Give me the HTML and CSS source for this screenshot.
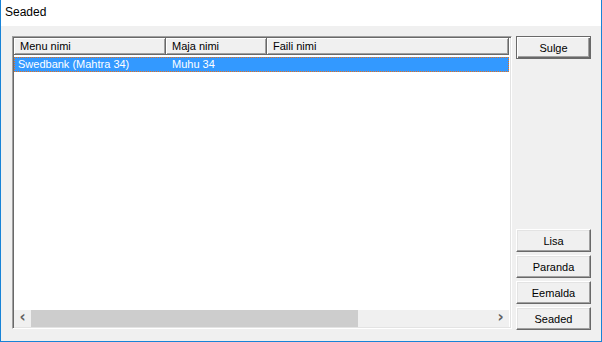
FILE: index.html
```html
<!DOCTYPE html>
<html lang="et">
<head>
    <meta charset="UTF-8">
    <title>Seaded</title>
    <link rel="stylesheet" href="styles.css">
</head>
<body>
    <div class="window">
        <div class="titlebar">Seaded</div>
        <div class="client">
            <div class="listview">
                <div class="header">
                    <div class="col col-menu">Menu nimi</div>
                    <div class="col col-maja">Maja nimi</div>
                    <div class="col col-faili">Faili nimi</div>
                </div>
                <div class="rows">
                    <div class="row selected">
                        <span class="cell col-menu">Swedbank (Mahtra 34)</span>
                        <span class="cell col-maja">Muhu 34</span>
                        <span class="cell col-faili"></span>
                    </div>
                </div>
                <div class="hscroll">
                    <div class="arrow">&#8249;</div>
                    <div class="track">
                        <div class="thumb"></div>
                    </div>
                    <div class="arrow">&#8250;</div>
                </div>
            </div>
            <div class="buttons">
                <button class="btn default">Sulge</button>
                <div class="spacer"></div>
                <button class="btn">Lisa</button>
                <button class="btn">Paranda</button>
                <button class="btn">Eemalda</button>
                <button class="btn">Seaded</button>
            </div>
        </div>
    </div>
</body>
</html>
```

FILE: styles.css
```css
body {
    margin: 0;
    padding: 0;
    font-family: "Liberation Sans", Arial, sans-serif;
    font-size: 11px;
    color: #000;
    background: #fff;
}
.window {
    width: 602px;
    height: 342px;
    box-sizing: border-box;
    border: 1px solid #1883d7;
    border-top: none;
    display: flex;
    flex-direction: column;
}
.titlebar {
    height: 26px;
    background: #fff;
    font-size: 12px;
    padding: 5px 0 0 4px;
    box-sizing: border-box;
}
.client {
    flex: 1;
    background: #f0f0f0;
    display: flex;
    padding: 10px 0 0 11px;
    gap: 4px;
}
.listview {
    width: 500px;
    height: 293px;
    box-sizing: border-box;
    border-top: 1px solid #a0a0a0;
    border-left: 1px solid #a0a0a0;
    border-right: 1px solid #fff;
    border-bottom: 1px solid #fff;
    box-shadow: inset 1px 1px 0 #696969, inset -1px -1px 0 #e3e3e3;
    padding: 1px 2px 1px 1px;
    background: #fff;
    display: flex;
    flex-direction: column;
}
.header {
    display: flex;
    height: 17px;
    background: #f0f0f0;
}
.header .col {
    box-sizing: border-box;
    height: 17px;
    padding: 2px 0 0 6px;
    border-right: 1px solid #696969;
    border-bottom: 1px solid #696969;
    box-shadow: inset 1px 1px 0 #fff, inset -1px -1px 0 #a0a0a0;
}
.col-menu {
    width: 152px;
}
.col-maja {
    width: 101px;
}
.col-faili {
    flex: 1;
}
.rows {
    flex: 1;
    padding-top: 2px;
}
.row {
    display: flex;
    height: 15px;
    line-height: 13px;
    box-sizing: border-box;
}
.row.selected {
    background: #3399ff;
    color: #fff;
    border: 1px dotted #e8701a;
}
.row .cell {
    box-sizing: border-box;
    padding-left: 3px;
    white-space: nowrap;
}
.row .col-maja {
    padding-left: 5px;
}
.hscroll {
    display: flex;
    height: 17px;
    background: #f0f0f0;
}
.arrow {
    width: 17px;
    text-align: center;
    font-family: "DejaVu Sans", sans-serif;
    font-size: 15px;
    font-weight: bold;
    line-height: 15px;
    color: #606060;
}
.track {
    flex: 1;
    padding: 0;
}
.thumb {
    width: 327px;
    height: 17px;
    background: #cdcdcd;
}
.buttons {
    width: 75px;
    height: 294px;
    display: flex;
    flex-direction: column;
    gap: 3px;
}
.spacer {
    flex: 1;
}
.btn {
    height: 23px;
    width: 75px;
    padding: 0;
    font-family: "Liberation Sans", Arial, sans-serif;
    font-size: 11px;
    color: #000;
    background: #f0f0f0;
    border-style: solid;
    border-width: 1px;
    border-color: #fff #696969 #696969 #fff;
    box-shadow: inset -1px -1px 0 #a0a0a0, inset 1px 1px 0 #e3e3e3;
}
.btn.default {
    border: 1px solid #696969;
    box-shadow: inset 1px 1px 0 #fff, inset -1px -1px 0 #696969, inset -2px -2px 0 #a0a0a0;
}
```
